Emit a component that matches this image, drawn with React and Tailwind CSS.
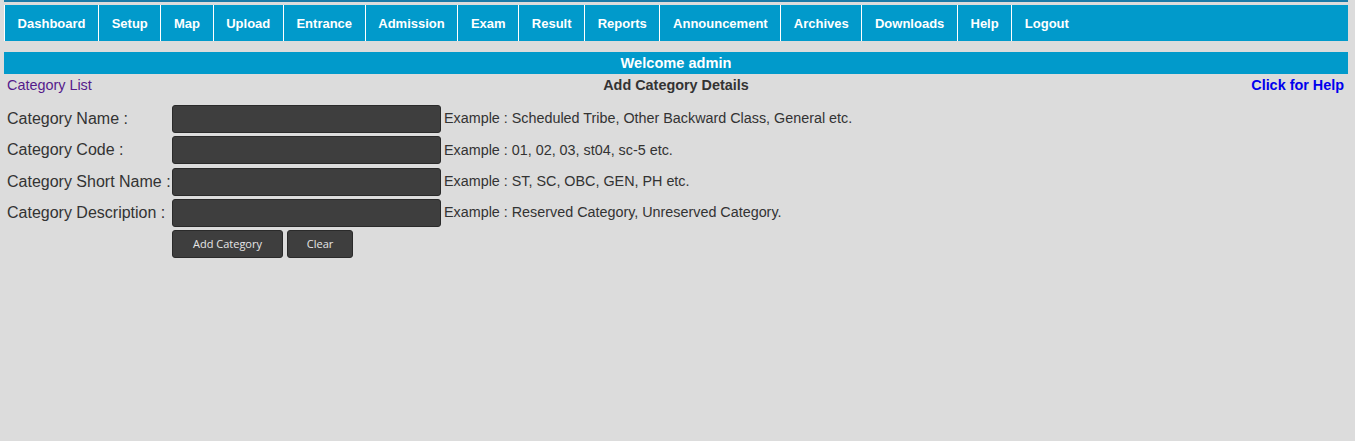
import React from "react";

const nav = ["Dashboard","Setup","Map","Upload","Entrance","Admission","Exam","Result","Reports","Announcement","Archives","Downloads","Help","Logout"];

const rows = [
  ["Category Name :", "Example : Scheduled Tribe, Other Backward Class, General etc."],
  ["Category Code :", "Example : 01, 02, 03, st04, sc-5 etc."],
  ["Category Short Name :", "Example : ST, SC, OBC, GEN, PH etc."],
  ["Category Description :", "Example : Reserved Category, Unreserved Category."],
];

export default function App() {
  return (
    <div className="min-h-[441px] bg-[#dcdcdc] px-[4px] pr-[7px] font-['Liberation_Sans',Arial,sans-serif]">
      <div className="h-[2px] bg-[#1a7ba8]" />
      <div className="mt-[3px] flex h-[36px] bg-[#019acb]">
        {nav.map((n) => (
          <div key={n} className="flex items-center border-l border-white px-[12.6px] pt-[1px] text-[13px] font-bold text-white">
            {n}
          </div>
        ))}
      </div>
      <div className="mt-[11px] flex h-[22px] items-center justify-center bg-[#019acb] pt-[1px] text-[14.6px] font-bold text-white">
        Welcome admin
      </div>
      <div className="relative flex h-[23px] items-center justify-between pt-[1px] text-[14.4px]">
        <span className="pl-[3px] text-[#551a8b]">Category List</span>
        <span className="absolute left-1/2 -translate-x-1/2 font-bold text-[#333]">Add Category Details</span>
        <span className="pr-[4px] font-bold text-[#0000ee]">Click for Help</span>
      </div>
      <div className="mt-[8px] grid grid-cols-[168px_269px_auto] items-center gap-y-[3.34px]">
        {rows.map(([l, e]) => (
          <React.Fragment key={l}>
            <div className="pl-[3px] text-[16px] text-[#333] whitespace-nowrap">{l}</div>
            <div className="h-[28px] rounded-[3px] border border-[#2a2a2a] bg-[#3e3e3e]" />
            <div className="pl-[3px] text-[14.35px] text-[#333]">{e}</div>
          </React.Fragment>
        ))}
        <div />
        <div className="flex gap-[4px]">
          <button className="h-[28px] w-[111px] rounded-[3px] border border-[#2a2a2a] bg-[#3e3e3e] font-['Open_Sans',sans-serif] text-[11px] text-[#e6e6e6]">Add Category</button>
          <button className="h-[28px] w-[66px] rounded-[3px] border border-[#2a2a2a] bg-[#3e3e3e] font-['Open_Sans',sans-serif] text-[11px] text-[#e6e6e6]">Clear</button>
        </div>
        <div />
      </div>
    </div>
  );
}
